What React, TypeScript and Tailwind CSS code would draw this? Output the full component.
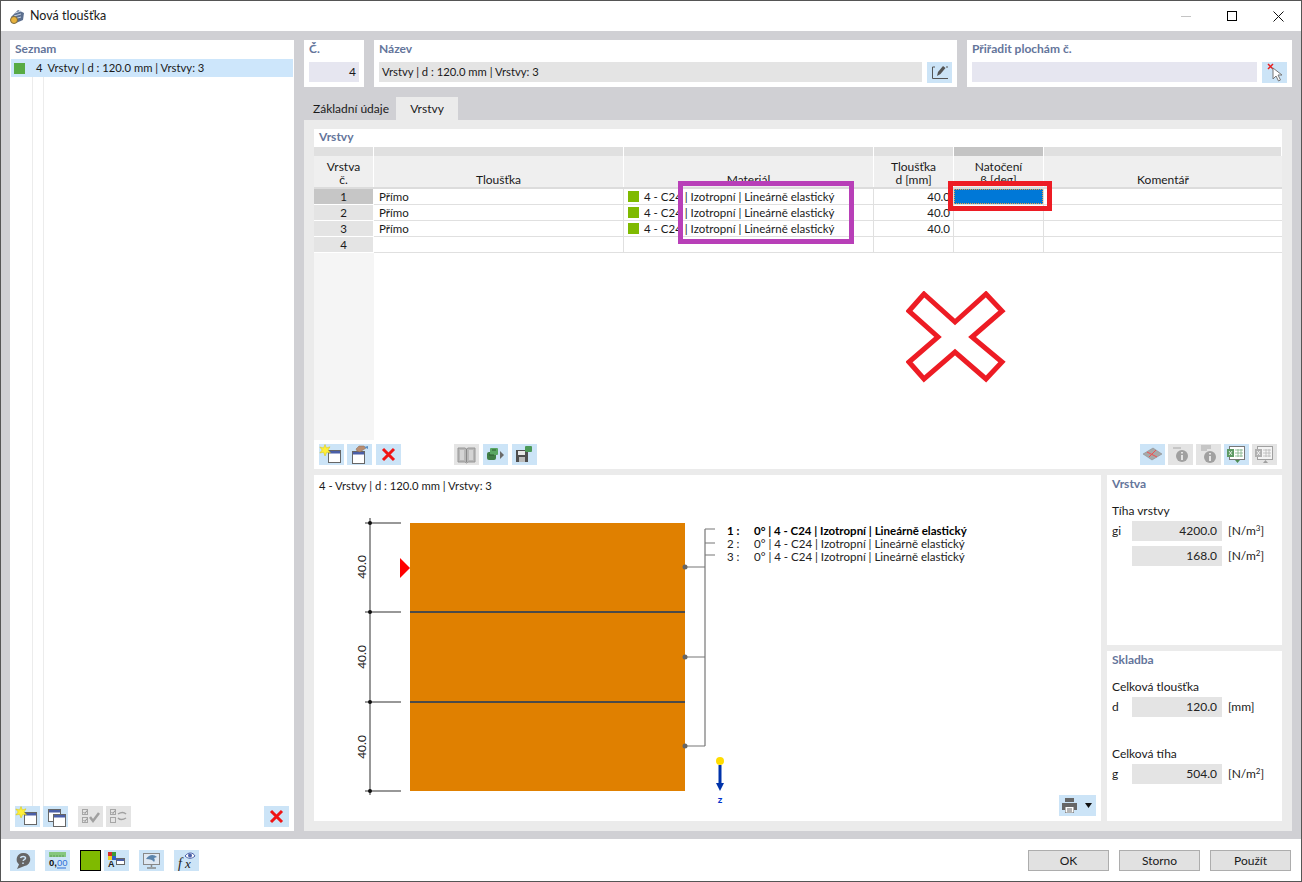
const font = { fontFamily: 'Lato, "Open Sans", sans-serif' };

const Star = () => <polygon points="6,0.500 7.400,4 11,2.800 9,6 11.500,8.800 7.800,8.200 6,12 4.600,8.200 0.800,9 3.200,6 0.800,3 4.600,4" fill="#ffef3a" stroke="#d9c400" strokeWidth="0.5" />;
const Win = ({ x, y, w = 12, h = 12 }: { x: number; y: number; w?: number; h?: number }) => (
  <g>
    <rect x={x + 0.5} y={y + 0.5} width={w} height={h} fill="#fff" stroke="#666" />
    <rect x={x + 1} y={y + 1} width={w - 1} height="2.5" fill="#4a5fa8" />
  </g>
);

const icons: Record<string, React.ReactNode> = {
  add: <><Win x={9} y={6} /><Star /></>,
  copy: <><Win x={5} y={3} /><Win x={10} y={8} /></>,
  edit: <><Win x={5} y={7} /><path d="M9 5l3-3h5l2 2-3 2-3 2-3-1z" fill="#b98e72" stroke="#8a6a55" strokeWidth="0.5" /><path d="M17 3l4-1v3z" fill="#5b8fc4" /></>,
  del: <path d="M7 5l11 11M18 5L7 16" stroke="#f01414" strokeWidth="3" fill="none" />,
  book: <><path d="M4 4h7l1.500 1 1.500-1h7v14h-7l-1.500 1-1.500-1H4z" fill="#b8b8b8" stroke="#969696" /><path d="M6 6h4v10H6zM15 6h4v10h-4z" fill="#d4d4d4" /><path d="M12.500 5v13" stroke="#888" /></>,
  green: <><rect x="4" y="8" width="9" height="8" rx="2" fill="#3f7d45" /><rect x="7" y="4" width="8" height="7" rx="1" fill="#5aa763" /><path d="M9 6h4M6 11h5" stroke="#2c5a32" /><path d="M17 7l4 4-4 4z" fill="#6a6a6a" /></>,
  save: <><rect x="4" y="6" width="12" height="12" fill="#4e4e4e" /><rect x="6" y="7" width="7" height="4" fill="#e8e8e8" /><rect x="7" y="13" width="6" height="5" fill="#bbb" /><rect x="13" y="2" width="7" height="6" rx="1" fill="#4c9a58" /></>,
  plate: <><path d="M3 10l10-6 9 6-10 6z" fill="#a8a8a8" stroke="#858585" strokeWidth="0.5" /><path d="M7 8l10 5M16 6L9 13" stroke="#f05050" strokeWidth="1" /></>,
  info1: <><path d="M5 4h8" stroke="#a8a8a8" /><circle cx="14" cy="12" r="6" fill="#a0a0a0" /><path d="M14 8v1.500M14 11v5" stroke="#e4e4e4" strokeWidth="2" /></>,
  info2: <><path d="M5 2h10M5 4h10M5 6h6" stroke="#a8a8a8" /><circle cx="14" cy="13" r="6" fill="#a0a0a0" /><path d="M14 9v1.500M14 12v5" stroke="#e4e4e4" strokeWidth="2" /></>,
  xlsOn: <><rect x="5.500" y="2.500" width="15" height="13" fill="#fff" stroke="#777" /><rect x="3" y="5" width="7" height="8" fill="#5d9a63" /><path d="M5 7l3 4M8 7l-3 4" stroke="#fff" strokeWidth="0.8" /><path d="M11 6h8M11 9h8M11 12h8M14 5v8M17 5v8" stroke="#7fb087" strokeWidth="0.8" /><path d="M11 16h5l-2.500 3z" fill="#4e8b54" /></>,
  xlsOff: <><rect x="5.500" y="2.500" width="15" height="13" fill="#f4f4f4" stroke="#a0a0a0" /><rect x="3" y="5" width="7" height="8" fill="#b0b0b0" /><path d="M5 7l3 4M8 7l-3 4" stroke="#fff" strokeWidth="0.8" /><path d="M11 6h8M11 9h8M11 12h8M14 5v8M17 5v8" stroke="#b8b8b8" strokeWidth="0.8" /><path d="M11 19h5l-2.500-3z" fill="#a0a0a0" /></>,
  check: <><rect x="4.500" y="3.500" width="5" height="5" fill="none" stroke="#a6a6a6" /><rect x="4.500" y="11.500" width="5" height="5" fill="none" stroke="#a6a6a6" /><path d="M5.500 6l1.500 1.500L9 4.500M5.500 14l1.500 1.500L9 12.500" stroke="#909090" fill="none" /><path d="M12 11l3 4 6-8" stroke="#a0a0a0" strokeWidth="2.500" fill="none" /></>,
  swap: <><rect x="4.500" y="3.500" width="5" height="5" fill="none" stroke="#a6a6a6" /><rect x="4.500" y="11.500" width="5" height="5" fill="none" stroke="#a6a6a6" /><path d="M5.500 6l1.500 1.500L9 4.500" stroke="#909090" fill="none" /><path d="M12 8c3-2 6-2 8 0M20 12c-3 2-6 2-8 0" stroke="#a0a0a0" strokeWidth="1.500" fill="none" /></>,
  help: <><path d="M13 3a6.500 6.500 0 0 1 1.500 13L7 19l2-4.500A6.500 6.500 0 0 1 13 3z" fill="#666" /><path d="M10.500 8c.5-2 5-2.200 5 0 0 1.800-2.300 1.600-2.300 3M13 12.500v1.500" stroke="#cce4f7" strokeWidth="1.500" fill="none" /></>,
  num: <><rect x="4" y="2" width="17" height="5" fill="#86c77f" /><path d="M6 5v2M9 5v2M12 5v2M15 5v2M18 5v2" stroke="#5c9a56" /><text x="4" y="16" fontSize="9.500" fontWeight="700" fill="#111" fontFamily="Liberation Sans, sans-serif">0,</text><text x="12" y="16" fontSize="9.500" fill="#2f6fd6" fontFamily="Liberation Sans, sans-serif">00</text><path d="M12 18h9" stroke="#2f6fd6" /></>,
  font: <><rect x="4" y="2" width="4" height="4" fill="#d62a2a" /><rect x="8" y="2" width="4" height="4" fill="#3a9a3a" /><rect x="4" y="6" width="4" height="4" fill="#f0d020" /><rect x="8" y="6" width="4" height="4" fill="#2f5fc8" /><text x="4" y="17" fontSize="9" fontWeight="700" fill="#222" fontFamily="Liberation Sans, sans-serif">A</text><rect x="12.500" y="8.500" width="8" height="6" fill="#fff" stroke="#666" /><rect x="13" y="9" width="7" height="2" fill="#4a5fa8" /></>,
  screen: <><rect x="4.500" y="3.500" width="16" height="11" fill="#dfe8f2" stroke="#888" /><path d="M7 9c3-5 8-5 11-2l-3 1c1 1 1 3 0 4-1-2-4-3-8-3z" fill="#5b84ac" /><path d="M12.500 15v2M8 18h9" stroke="#888" strokeWidth="1.500" /></>,
  fx: <><text x="4" y="18" fontSize="14" fontStyle="italic" fill="#222" fontFamily="Liberation Serif, serif">f</text><text x="11" y="18" fontSize="13" fontStyle="italic" fill="#222" fontFamily="Liberation Serif, serif">x</text><path d="M11 6c3-4 8-4 10 0-3 3-7 3-10 0z" fill="#fff" stroke="#4a5fa8" /><circle cx="16" cy="5.500" r="2" fill="#4a5fa8" /></>,
  pen: <><path d="M8 5H5.500v11.500H21M19 5h2" stroke="#555" fill="none" /><path d="M10 14l1-4 5-6 2.500 2-5 6z" fill="#555" /></>,
  pick: <><path d="M6 2l5 5M11 2L6 7" stroke="#e82020" strokeWidth="1.500" /><path d="M11 6v11l3-3 2.500 5 2-1-2.500-5h4z" fill="#fff" stroke="#777" /></>,
};

const Btn = ({ icon, off }: { icon: string; off?: boolean }) => (
  <div className={`h-[21px] w-[25px] shrink-0 ${off ? "bg-[#e4e4e4]" : "bg-[#cce4f7]"}`}>
    <svg width="25" height="21" viewBox="0 0 25 21">{icons[icon]}</svg>
  </div>
);

const Title = ({ children }: { children: string }) => <p className="text-[12px] font-bold leading-[16px] text-[#64759b]">{children}</p>;

const columns = ["w-[60px]", "w-[250px]", "w-[250px]", "w-[80px]", "w-[90px]", "w-[238px]"];

const Legend = ({ n, bold }: { n: number; bold?: boolean }) => (
  <div className={`flex h-[13px] items-center text-[11.500px] leading-[13px] text-[#222] ${bold ? "font-bold text-black" : ""}`}>
    <span className="w-[27px]">{n} :</span>
    <span>0° | 4 - C24 | Izotropní | Lineárně elastický</span>
  </div>
);

const Value = ({ value, unit, sup }: { value: string; unit: string; sup?: string }) => (
  <div className="flex items-center">
    <div className="h-[20px] w-[90px] bg-[#e4e4e4] pr-[5px] text-right text-[12px] leading-[20px] text-[#222]">{value}</div>
    <span className="ml-[6px] text-[12px] text-[#222]">
      [{unit}
      {sup ? <sup className="text-[8px]">{sup}</sup> : null}]
    </span>
  </div>
);

export default function App() {
  return (
    <div className="flex h-[882px] w-[1302px] flex-col overflow-hidden border border-[#555] bg-white text-[12px] text-[#1a1a1a]" style={font}>
      <div className="flex h-[30px] shrink-0 items-center bg-white pl-[8px]">
        <svg width="17" height="17" viewBox="0 0 17 17">
          <path d="M2 9l7-7 6 3-1 7-7 3z" fill="#5c6f8f" />
          <path d="M6 5l6-2M5 8l7-2M5 11l7-2" stroke="#c6d2e2" />
          <circle cx="5" cy="12" r="3.500" fill="#e8b23c" stroke="#7a6a40" />
        </svg>
        <span className="ml-[4px] mt-[1px] text-[12.500px]">Nová tloušťka</span>
        <div className="ml-auto flex h-full items-center">
          <div className="flex w-[46px] justify-center"><div className="h-px w-[10px] bg-[#c4c4c4]" /></div>
          <div className="flex w-[46px] justify-center"><div className="size-[10px] border border-black" /></div>
          <div className="flex w-[46px] justify-center">
            <svg width="11" height="11" viewBox="0 0 11 11"><path d="M.5.5l10 10M10.500.5l-10 10" stroke="#111" fill="none" /></svg>
          </div>
        </div>
      </div>

      <div className="flex min-h-0 flex-1 gap-[10px] bg-[#d0d0d4] px-[9px] pb-[8px] pt-[9px]">
        <div className="flex w-[284px] shrink-0 flex-col bg-white">
          <div className="h-[19px] pl-[5px] pt-[1px]"><Title>Seznam</Title></div>
          <div className="relative flex-1">
            <div className="mx-px flex h-[18px] items-center bg-[#cde6fb] text-[11.250px]">
              <div className="ml-[3px] size-[11px] bg-[#58ab44]" />
              <span className="ml-[11px]">4</span>
              <span className="ml-[5px]">Vrstvy | d : 120.0 mm | Vrstvy: 3</span>
            </div>
            <div className="flex h-[729px] pl-[22px]">
              <div className="w-[12px] border-x border-[#ececec]" />
            </div>
            <div className="flex items-center pl-[5px]">
              <Btn icon="add" />
              <div className="ml-[3px]"><Btn icon="copy" /></div>
              <div className="ml-[10px]"><Btn icon="check" off /></div>
              <div className="ml-[3px]"><Btn icon="swap" off /></div>
              <div className="ml-auto mr-[5px]"><Btn icon="del" /></div>
            </div>
          </div>
        </div>

        <div className="flex w-[988px] shrink-0 flex-col">
          <div className="flex h-[47px] gap-[10px]">
            <div className="w-[60px] bg-white px-[5px] pt-[1px]">
              <Title>Č.</Title>
              <div className="mt-[5px] h-[20px] bg-[#e6e6f0] pr-[3px] text-right leading-[20px]">4</div>
            </div>
            <div className="w-[583px] bg-white px-[5px] pt-[1px]">
              <Title>Název</Title>
              <div className="mt-[5px] flex gap-[5px]">
                <div className="h-[20px] flex-1 bg-[#e4e4e4] pl-[3px] text-[11.250px] leading-[20px]">Vrstvy | d : 120.0 mm | Vrstvy: 3</div>
                <Btn icon="pen" />
              </div>
            </div>
            <div className="flex-1 bg-white px-[5px] pt-[1px]">
              <Title>Přiřadit plochám č.</Title>
              <div className="mt-[5px] flex gap-[5px]">
                <div className="h-[20px] flex-1 bg-[#e6e6f0]" />
                <Btn icon="pick" />
              </div>
            </div>
          </div>

          <div className="mt-[10px] flex h-[23px] items-center">
            <div className="flex h-full w-[92px] items-center justify-center pl-[2px]">Základní údaje</div>
            <div className="flex h-full w-[62px] items-center justify-center bg-[#ebebeb]">Vrstvy</div>
          </div>

          <div className="flex flex-1 flex-col gap-[6px] bg-[#ebebeb] px-[10px] pb-[9px] pt-[9px]">
            <div className="relative flex h-[340px] flex-col bg-white">
              <div className="h-[18px] pl-[5px]"><Title>Vrstvy</Title></div>
              <div className="flex h-[9px]">
                {columns.map((c, i) => (
                  <div key={i} className={`${c} border-r border-white ${i === 4 ? "bg-[#c4c4c4]" : "bg-[#e0e0e0]"}`} />
                ))}
              </div>
              <div className="flex h-[33px] border-b-2 border-[#dcdcdc] bg-[#efefef] text-center leading-[13px]">
                <div className="flex w-[60px] flex-col justify-end border-r border-white pb-px"><span>Vrstva</span><span>č.</span></div>
                <div className="flex w-[250px] flex-col justify-end border-r border-white pb-px">Tloušťka</div>
                <div className="flex w-[250px] flex-col justify-end border-r border-white pb-px">Materiál</div>
                <div className="flex w-[80px] flex-col justify-end border-r border-white pb-px"><span>Tloušťka</span><span>d [mm]</span></div>
                <div className="flex w-[90px] flex-col justify-end border-r border-white pb-px"><span>Natočení</span><span>β [deg]</span></div>
                <div className="flex w-[238px] flex-col justify-end pb-px">Komentář</div>
              </div>
              {[1, 2, 3, 4].map((n) => (
                <div key={n} className="flex h-[16px] text-[11.500px] leading-[15px]">
                  <div className={`w-[60px] border-b border-r border-white text-center ${n === 1 ? "bg-[#c6c6c6]" : "bg-[#e4e4e4]"}`}>{n}</div>
                  <div className="w-[250px] border-b border-r border-[#e0e0e0] pl-[5px]">{n < 4 ? "Přímo" : ""}</div>
                  <div className="flex w-[250px] items-center border-b border-r border-[#e0e0e0] pl-[4px]">
                    {n < 4 ? (
                      <>
                        <div className="size-[11px] bg-[#7fba00]" />
                        <span className="ml-[5px]">4 - C24 | Izotropní | Lineárně elastický</span>
                      </>
                    ) : null}
                  </div>
                  <div className="w-[80px] border-b border-r border-[#e0e0e0] pr-[3px] text-right">{n < 4 ? "40.0" : ""}</div>
                  <div className="w-[90px] border-b border-r border-[#e0e0e0]">
                    {n === 1 ? <div className="h-[15px] border border-dotted border-[#f0a040] bg-[#0078d7]" /> : null}
                  </div>
                  <div className="w-[238px] border-b border-[#e0e0e0]" />
                </div>
              ))}
              <div className="h-[187px] w-[60px] bg-[#f5f5f5]" />
              <div className="mt-[4px] flex px-[5px]">
                <Btn icon="add" />
                <div className="ml-[3px]"><Btn icon="edit" /></div>
                <div className="ml-[4px]"><Btn icon="del" /></div>
                <div className="ml-[53px]"><Btn icon="book" off /></div>
                <div className="ml-[4px]"><Btn icon="green" /></div>
                <div className="ml-[4px]"><Btn icon="save" /></div>
                <div className="ml-auto flex gap-[3px]">
                  <Btn icon="plate" />
                  <Btn icon="info1" off />
                  <Btn icon="info2" off />
                  <Btn icon="xlsOn" />
                  <Btn icon="xlsOff" off />
                </div>
              </div>

              <div className="absolute left-[364px] top-[52px] h-[63px] w-[176px] border-[5px] border-[#b83fb8]" />
              <div className="absolute left-[634px] top-[52px] h-[30px] w-[104px] border-[5px] border-[#ed1c24]" />
              <svg className="absolute left-[592px] top-[162px]" width="100" height="92" viewBox="0 0 100 92">
                <path d="M18 3L49 31 80 3 96 20 66 46 96 71 80 88 49 61 18 88 3 71 32 46 3 20z" fill="#fff" stroke="#ed1c24" strokeWidth="5" />
              </svg>
            </div>

            <div className="flex h-[346px] gap-[6px]">
              <div className="relative w-[787px] bg-white">
                <p className="h-[24px] pl-[5px] pt-[3px] text-[11.250px]">4 - Vrstvy | d : 120.0 mm | Vrstvy: 3</p>
                <svg width="787" height="322" viewBox="314 499 787 322" className="block">
                  <rect x="410" y="523" width="275" height="268" fill="#e08000" />
                  <path d="M410 612h275M410 702h275" stroke="#4a4a4a" strokeWidth="2" />
                  <path d="M370 518v277M365 523h36M365 612h36M365 702h36M365 791h36" stroke="#777" strokeWidth="1.500" />
                  {[523, 612, 702, 791].map((y) => <circle key={y} cx="370" cy={y} r="2" fill="#111" />)}
                  <path d="M400 558l10 10-10 10z" fill="#f00" />
                  {[567, 657, 747].map((y) => (
                    <text key={y} x="366" y={y} transform={`rotate(-90 366 ${y})`} textAnchor="middle" fontSize="12" fill="#222" fontFamily="Lato, sans-serif">40.0</text>
                  ))}
                  <path d="M685 567h20M685 657h20M685 746h20M705 529v217M705 529h10M705 543h10M705 555h10" stroke="#777" strokeWidth="1.200" fill="none" />
                  {[567, 657, 746].map((y) => <circle key={y} cx="685" cy={y} r="2.500" fill="#666" />)}
                  <path d="M720 765v20" stroke="#0033aa" strokeWidth="3" />
                  <path d="M716 783h8l-4 8z" fill="#0033aa" />
                  <circle cx="720" cy="761" r="4" fill="#ffdc00" />
                  <text x="720" y="803" textAnchor="middle" fontSize="10" fontWeight="700" fill="#0033cc" fontFamily="Lato, sans-serif">z</text>
                </svg>
                <div className="absolute left-[413px] top-[49px]">
                  <Legend n={1} bold />
                  <Legend n={2} />
                  <Legend n={3} />
                </div>
                <div className="absolute bottom-[5px] right-[5px] flex h-[21px] w-[37px] items-center bg-[#cce4f7] pl-[2px]">
                  <svg width="17" height="17" viewBox="0 0 17 17">
                    <path d="M4 1h9v4H4zM1 6h15v7h-3v3H4v-3H1z" fill="#666" />
                    <rect x="4.500" y="10" width="8" height="5.500" fill="#fff" />
                    <path d="M6 12h5M6 14h5" stroke="#666" />
                  </svg>
                  <svg className="ml-[7px]" width="7" height="5" viewBox="0 0 7 5"><path d="M0 0h7L3.500 5z" fill="#111" /></svg>
                </div>
              </div>

              <div className="flex w-[175px] flex-col gap-[6px]">
                <div className="h-[170px] bg-white px-[5px] pt-[1px]">
                  <Title>Vrstva</Title>
                  <p className="mt-[11px] leading-[16px]">Tíha vrstvy</p>
                  <div className="mt-[2px] flex gap-[2px]">
                    <span className="w-[18px] leading-[20px]">gi</span>
                    <div className="flex flex-col gap-[5px]">
                      <Value value="4200.0" unit="N/m" sup="3" />
                      <Value value="168.0" unit="N/m" sup="2" />
                    </div>
                  </div>
                </div>
                <div className="h-[170px] bg-white px-[5px] pt-[1px]">
                  <Title>Skladba</Title>
                  <p className="mt-[11px] leading-[16px]">Celková tloušťka</p>
                  <div className="mt-[2px] flex gap-[2px]">
                    <span className="w-[18px] leading-[20px]">d</span>
                    <Value value="120.0" unit="mm" />
                  </div>
                  <p className="mt-[29px] leading-[16px]">Celková tíha</p>
                  <div className="mt-[2px] flex gap-[2px]">
                    <span className="w-[18px] leading-[20px]">g</span>
                    <Value value="504.0" unit="N/m" sup="2" />
                  </div>
                </div>
              </div>
            </div>
          </div>
        </div>
      </div>

      <div className="flex h-[42px] shrink-0 items-center bg-white pl-[9px] pr-[10px]">
        <Btn icon="help" />
        <div className="ml-[10px]"><Btn icon="num" /></div>
        <div className="ml-[10px] h-[21px] w-[21px] border border-black bg-[#7fba00]" />
        <div className="ml-[3px]"><Btn icon="font" /></div>
        <div className="ml-[10px]"><Btn icon="screen" /></div>
        <div className="ml-[10px]"><Btn icon="fx" /></div>
        <div className="ml-auto flex gap-[10px]">
          {["OK", "Storno", "Použít"].map((b) => (
            <div key={b} className="flex h-[21px] w-[81px] items-center justify-center border border-[#adadad] bg-[#e1e1e1] pt-px">{b}</div>
          ))}
        </div>
      </div>
    </div>
  );
}
